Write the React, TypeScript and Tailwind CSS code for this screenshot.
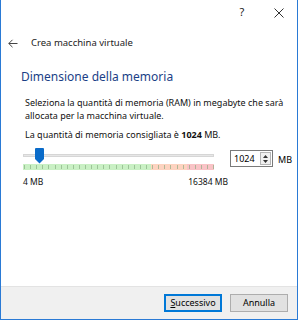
import React from "react";

const ticks = Array.from({ length: 32 }, (_, i) => i);

export default function App() {
  return (
    <div
      className="w-[298px] h-[320px] bg-white border-x border-b border-[#2a7ad5] flex flex-col text-[#000] overflow-hidden"
      style={{ fontFamily: '"Noto Sans", "Open Sans", sans-serif' }}
    >
      {/* title bar */}
      <div className="h-[25px] flex items-center justify-end text-[11px] text-[#222]">
        <span className="w-[10px] text-center mr-[27px]">?</span>
        <svg width="10" height="10" viewBox="0 0 10 10" className="mr-[13px]">
          <path d="M0.5 0.5 L9.5 9.5 M9.5 0.5 L0.5 9.5" stroke="#333" strokeWidth="1" />
        </svg>
      </div>
      {/* nav row */}
      <div className="h-[36px] flex items-center pl-[7px] text-[9.5px] text-[#222]">
        <svg width="10" height="9" viewBox="0 0 10 9" className="mr-[13px]">
          <path d="M0.8 4.5 H9.5 M4.5 0.8 L0.8 4.5 L4.5 8.2" stroke="#444" strokeWidth="1" fill="none" />
        </svg>
        <span>Crea macchina virtuale</span>
      </div>
      {/* heading */}
      <div className="pl-[20px] pt-[7px] text-[12px] text-[#1b3f87] leading-[18px]">Dimensione della memoria</div>
      {/* body */}
      <div className="pl-[24px] pr-[10px] pt-[10px] text-[9px] leading-[13px] text-[#111]">
        <p>Seleziona la quantità di memoria (RAM) in megabyte che sarà allocata per la macchina virtuale.</p>
        <p className="mt-[6px]">
          La quantità di memoria consigliata è <b>1024</b> MB.
        </p>
      </div>
      {/* slider row */}
      <div className="flex pl-[22px] pt-[7px]">
        <div className="w-[191px] flex flex-col">
          <div className="relative h-[16px]">
            <div className="absolute left-0 right-0 top-[6px] h-[3px] bg-[#e7e7e7] border border-[#d6d6d6]" />
            <svg width="9" height="16" viewBox="0 0 9 16" className="absolute left-[12px] top-0">
              <path d="M0 1 Q0 0 1 0 H8 Q9 0 9 1 V11 L4.5 15.5 L0 11 Z" fill="#0a6bc9" />
            </svg>
          </div>
          <div className="flex h-[6px]">
            <div className="w-[128px] bg-[#c9f0c4]" />
            <div className="w-[36px] bg-[#fdd3c0]" />
            <div className="flex-1 bg-[#f9c3c6]" />
          </div>
          <div className="relative h-0">
            {ticks.map((i) => (
              <div
                key={i}
                className="absolute top-[-5px] w-px h-[4px] bg-[#7fa67a]/60"
                style={{ left: `${Math.round(i * 6.1) + 1}px` }}
              />
            ))}
          </div>
          <div className="flex justify-between text-[8.5px] mt-[6px] text-[#111]">
            <span>4 MB</span>
            <span className="mr-[-14px]">16384 MB</span>
          </div>
        </div>
        <div className="ml-[16px] mt-[2px] flex items-start">
          <div className="w-[43px] h-[17px] border border-[#7a7a7a] flex items-center bg-white">
            <span className="text-[9px] pl-[3px] flex-1">1024</span>
            <div className="w-[11px] h-[13px] mr-[1px] border border-[#b5b5b5] bg-[#f0f0f0] flex flex-col items-center justify-center">
              <svg width="7" height="10" viewBox="0 0 7 10">
                <path d="M3.5 1 L6 4 H1 Z M3.5 9 L6 6 H1 Z" fill="#333" />
              </svg>
            </div>
          </div>
          <span className="text-[9px] ml-[5px] mt-[3px]">MB</span>
        </div>
      </div>
      <div className="flex-1" />
      {/* footer */}
      <div className="h-[33px] bg-[#f0f0f0] border-t border-[#e3e3e3] flex items-center justify-end pr-[9px] gap-[8px] text-[9px]">
        <button className="w-[58px] h-[18px] bg-[#e1e1e1] border border-[#0078d7] outline outline-1 outline-[#0078d7] -outline-offset-2 flex items-center justify-center">
          <span>
            <span className="underline">S</span>uccessivo
          </span>
        </button>
        <button className="w-[58px] h-[18px] bg-[#e1e1e1] border border-[#adadad] flex items-center justify-center">
          Annulla
        </button>
      </div>
    </div>
  );
}
